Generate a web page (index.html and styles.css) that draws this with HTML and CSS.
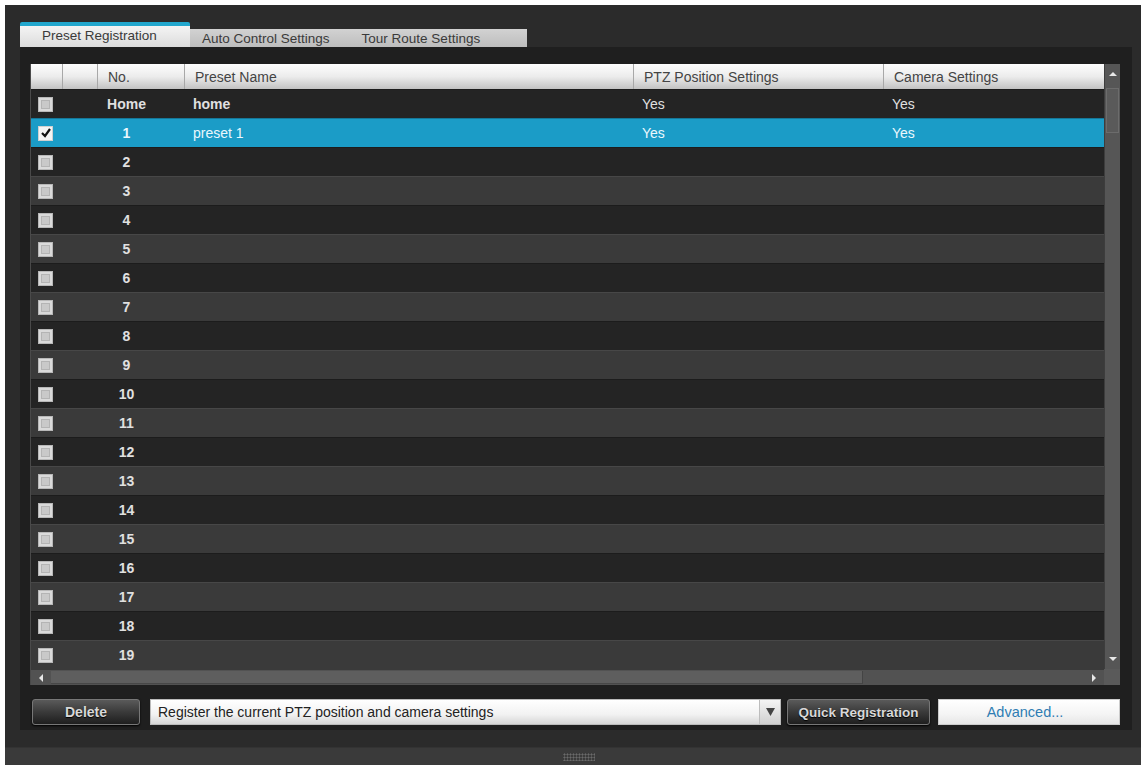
FILE: index.html
```html
<!DOCTYPE html>
<html>
<head>
<meta charset="utf-8">
<link rel="stylesheet" href="styles.css">
</head>
<body>
<div class="window">
  <div class="content">
    <div class="tabs">
      <div class="tab active">Preset Registration</div>
      <div class="tab-rest">
        <div class="tab">Auto Control Settings</div>
        <div class="tab">Tour Route Settings</div>
      </div>
    </div>
    <div class="panel">
      <div class="table">
        <div class="main-area">
          <div class="cols">
            <div class="row head">
              <div class="cell"></div>
              <div class="cell"></div>
              <div class="cell">No.</div>
              <div class="cell">Preset Name</div>
              <div class="cell">PTZ Position Settings</div>
              <div class="cell">Camera Settings</div>
            </div>
            <div class="row dark bold">
              <div class="cell cb-cell"><span class="cb"></span></div>
              <div class="cell"></div>
              <div class="cell num">Home</div>
              <div class="cell">home</div>
              <div class="cell normal">Yes</div>
              <div class="cell normal">Yes</div>
            </div>
            <div class="row selected">
              <div class="cell cb-cell"><span class="cb checked"><svg width="12" height="12" viewBox="0 0 12 12"><path d="M2 6 L5 9 L10 2" fill="none" stroke="#111" stroke-width="2.2"/></svg></span></div>
              <div class="cell"></div>
              <div class="cell num">1</div>
              <div class="cell">preset 1</div>
              <div class="cell">Yes</div>
              <div class="cell">Yes</div>
            </div>
            <div class="row dark"><div class="cell cb-cell"><span class="cb"></span></div><div class="cell"></div><div class="cell num">2</div><div class="cell"></div><div class="cell"></div><div class="cell"></div></div>
            <div class="row light"><div class="cell cb-cell"><span class="cb"></span></div><div class="cell"></div><div class="cell num">3</div><div class="cell"></div><div class="cell"></div><div class="cell"></div></div>
            <div class="row dark"><div class="cell cb-cell"><span class="cb"></span></div><div class="cell"></div><div class="cell num">4</div><div class="cell"></div><div class="cell"></div><div class="cell"></div></div>
            <div class="row light"><div class="cell cb-cell"><span class="cb"></span></div><div class="cell"></div><div class="cell num">5</div><div class="cell"></div><div class="cell"></div><div class="cell"></div></div>
            <div class="row dark"><div class="cell cb-cell"><span class="cb"></span></div><div class="cell"></div><div class="cell num">6</div><div class="cell"></div><div class="cell"></div><div class="cell"></div></div>
            <div class="row light"><div class="cell cb-cell"><span class="cb"></span></div><div class="cell"></div><div class="cell num">7</div><div class="cell"></div><div class="cell"></div><div class="cell"></div></div>
            <div class="row dark"><div class="cell cb-cell"><span class="cb"></span></div><div class="cell"></div><div class="cell num">8</div><div class="cell"></div><div class="cell"></div><div class="cell"></div></div>
            <div class="row light"><div class="cell cb-cell"><span class="cb"></span></div><div class="cell"></div><div class="cell num">9</div><div class="cell"></div><div class="cell"></div><div class="cell"></div></div>
            <div class="row dark"><div class="cell cb-cell"><span class="cb"></span></div><div class="cell"></div><div class="cell num">10</div><div class="cell"></div><div class="cell"></div><div class="cell"></div></div>
            <div class="row light"><div class="cell cb-cell"><span class="cb"></span></div><div class="cell"></div><div class="cell num">11</div><div class="cell"></div><div class="cell"></div><div class="cell"></div></div>
            <div class="row dark"><div class="cell cb-cell"><span class="cb"></span></div><div class="cell"></div><div class="cell num">12</div><div class="cell"></div><div class="cell"></div><div class="cell"></div></div>
            <div class="row light"><div class="cell cb-cell"><span class="cb"></span></div><div class="cell"></div><div class="cell num">13</div><div class="cell"></div><div class="cell"></div><div class="cell"></div></div>
            <div class="row dark"><div class="cell cb-cell"><span class="cb"></span></div><div class="cell"></div><div class="cell num">14</div><div class="cell"></div><div class="cell"></div><div class="cell"></div></div>
            <div class="row light"><div class="cell cb-cell"><span class="cb"></span></div><div class="cell"></div><div class="cell num">15</div><div class="cell"></div><div class="cell"></div><div class="cell"></div></div>
            <div class="row dark"><div class="cell cb-cell"><span class="cb"></span></div><div class="cell"></div><div class="cell num">16</div><div class="cell"></div><div class="cell"></div><div class="cell"></div></div>
            <div class="row light"><div class="cell cb-cell"><span class="cb"></span></div><div class="cell"></div><div class="cell num">17</div><div class="cell"></div><div class="cell"></div><div class="cell"></div></div>
            <div class="row dark"><div class="cell cb-cell"><span class="cb"></span></div><div class="cell"></div><div class="cell num">18</div><div class="cell"></div><div class="cell"></div><div class="cell"></div></div>
            <div class="row light"><div class="cell cb-cell"><span class="cb"></span></div><div class="cell"></div><div class="cell num">19</div><div class="cell"></div><div class="cell"></div><div class="cell"></div></div>
          </div>
          <div class="vscroll">
            <div class="arrow-v"><svg width="8" height="6" viewBox="0 0 8 6"><polygon points="0,5 4,1 8,5" fill="#e8e8e8"/></svg></div>
            <div class="vthumb"></div>
            <div class="vtrack"></div>
            <div class="arrow-v"><svg width="8" height="6" viewBox="0 0 8 6"><polygon points="0,1 4,5 8,1" fill="#e8e8e8"/></svg></div>
          </div>
        </div>
        <div class="hbar">
          <div class="hscroll">
            <div class="arrow-h"><svg width="6" height="8" viewBox="0 0 6 8"><polygon points="5,0 1,4 5,8" fill="#e8e8e8"/></svg></div>
            <div class="hthumb"></div>
            <div class="htrack"></div>
            <div class="arrow-h"><svg width="6" height="8" viewBox="0 0 6 8"><polygon points="1,0 5,4 1,8" fill="#e8e8e8"/></svg></div>
          </div>
          <div class="corner"></div>
        </div>
      </div>
      <div class="controls">
        <button class="btn dark-btn delete">Delete</button>
        <div class="select">
          <span class="select-text">Register the current PTZ position and camera settings</span>
          <span class="select-arrow"><svg width="9" height="8" viewBox="0 0 9 8"><polygon points="0,0 9,0 4.5,8" fill="#444"/></svg></span>
        </div>
        <button class="btn dark-btn quick">Quick Registration</button>
        <button class="btn advanced">Advanced...</button>
      </div>
    </div>
  </div>
  <div class="status">
    <div class="grip"></div>
  </div>
</div>
</body>
</html>
```

FILE: styles.css
```css
* { box-sizing: border-box; }
body {
  margin: 0;
  background: #ffffff;
  font-family: "Liberation Sans", Arial, sans-serif;
}
.window {
  margin: 5px 0 0 5px;
  width: 1136px;
  height: 760px;
  background: #2b2b2b;
  display: flex;
  flex-direction: column;
}
.content {
  flex: 1;
  padding: 17px 9px 17px 15px;
  display: flex;
  flex-direction: column;
}
.tabs {
  height: 25px;
  display: flex;
  align-items: flex-end;
}
.tab {
  font-size: 13.5px;
  color: #3a3a3a;
  white-space: nowrap;
}
.tab.active {
  width: 170px;
  height: 25px;
  border-top: 4px solid #22a7cd;
  background: linear-gradient(#f4f4f4, #dcdcdc);
  padding: 2px 0 0 22px;
  border-radius: 2px 2px 0 0;
}
.tab-rest {
  width: 337px;
  height: 18px;
  background: linear-gradient(#d2d2d2, #bdbdbd);
  display: flex;
  align-items: center;
  padding-left: 12px;
  gap: 32px;
}
.panel {
  height: 683px;
  background: #1f1f1f;
  padding: 17px 12px 5px 10px;
  display: flex;
  flex-direction: column;
}
.table {
  width: 1090px;
  height: 621px;
  display: flex;
  flex-direction: column;
  border-left: 1px solid #4a4a4a;
}
.main-area {
  display: flex;
  height: 605px;
}
.cols {
  width: 1073px;
}
.row {
  display: grid;
  grid-template-columns: 31px 35px 87px 449px 250px 221px;
  height: 29px;
  font-size: 14px;
  color: #e0e0e0;
}
.row .cell {
  display: flex;
  align-items: center;
  padding-left: 9px;
  white-space: nowrap;
  overflow: hidden;
}
.row.head {
  height: 25px;
  background: linear-gradient(#fdfdfd, #ececec 50%, #c2c2c2);
  color: #444;
  font-size: 14px;
}
.row.head .cell {
  border-left: 1px solid #a8a8a8;
  padding-left: 10px;
}
.row.head .cell:first-child { border-left: none; }
.row.dark {
  background: #242424;
  border-top: 1px solid #1c1c1c;
}
.row.light {
  background: #3a3a3a;
  border-top: 1px solid #474747;
}
.row.selected {
  background: #1b9cc7;
  color: #eaf7fd;
  border-top: 1px solid #15789a;
}
.row.bold .cell { font-weight: bold; }
.row.bold .cell.normal { font-weight: normal; }
.row .cell.num {
  justify-content: center;
  padding: 0 28px 0 0;
  font-weight: bold;
}
.row .cell.cb-cell {
  padding-left: 7px;
}
.cb {
  width: 15px;
  height: 15px;
  border: 1px solid #b8b8b8;
  background: #c9c9c9;
  box-shadow: inset 0 0 0 2px #dadada, inset 0 0 0 3px #b4b4b4;
  display: flex;
  align-items: center;
  justify-content: center;
}
.cb.checked {
  background: #f4f4f4;
  box-shadow: none;
  border-color: #d0d0d0;
}
.vscroll {
  width: 16px;
  display: flex;
  flex-direction: column;
  background: #565656;
  border-left: 1px solid #3d3d3d;
}
.arrow-v {
  height: 20px;
  display: flex;
  align-items: center;
  justify-content: center;
}
.vthumb {
  height: 45px;
  margin: 4px 1px 0 1px;
  border: 1px solid #6c6c6c;
  background: #5a5a5a;
}
.vtrack { flex: 1; }
.hbar {
  display: flex;
  height: 16px;
}
.hscroll {
  width: 1074px;
  display: flex;
  align-items: stretch;
  background: #525252;
  border-top: 1px solid #3a3a3a;
}
.arrow-h {
  width: 20px;
  display: flex;
  align-items: center;
  justify-content: center;
}
.hthumb {
  width: 812px;
  margin: 1px 0;
  background: #5e5e5e;
  border-right: 1px solid #444;
  border-bottom: 1px solid #474747;
}
.htrack { flex: 1; }
.corner {
  width: 16px;
  background: #5a5a5a;
}
.controls {
  margin-top: 14px;
  height: 26px;
  display: flex;
  padding-left: 2px;
}
.btn {
  font-family: "Liberation Sans", Arial, sans-serif;
  height: 26px;
  border-radius: 3px;
  padding: 0;
}
.dark-btn {
  background: linear-gradient(#5a5a5a, #3a3a3a 50%, #1e1e1e);
  border: 1px solid #777;
  color: #d8d8d8;
  font-weight: bold;
  font-size: 14px;
  text-shadow: 0 1px 1px #000;
  box-shadow: 0 1px 2px #000;
}
.delete {
  width: 108px;
}
.select {
  width: 631px;
  margin-left: 10px;
  height: 26px;
  background: linear-gradient(#ffffff, #f2f2f2 60%, #d6d6d6);
  border: 1px solid #bbb;
  display: flex;
  align-items: center;
}
.select-text {
  flex: 1;
  font-size: 14px;
  color: #222;
  padding-left: 7px;
}
.select-arrow {
  width: 21px;
  height: 24px;
  border-left: 1px solid #bcbcbc;
  background: linear-gradient(#f4f4f4, #d0d0d0);
  display: flex;
  align-items: center;
  justify-content: center;
}
.quick {
  width: 143px;
  margin-left: 6px;
  font-size: 13.5px;
}
.advanced {
  width: 182px;
  margin-left: 8px;
  background: linear-gradient(#ffffff, #f4f4f4 60%, #e6e6e6);
  border: 1px solid #ccc;
  border-radius: 0;
  color: #2f7db3;
  font-size: 14.5px;
  padding-right: 8px;
}
.status {
  height: 18px;
  background: #3a3a3a;
  border-top: 1px solid #333;
  display: flex;
  align-items: center;
  justify-content: center;
}
.grip {
  width: 32px;
  height: 8px;
  margin-left: 12px;
  background-image: radial-gradient(#6a6a6a 45%, transparent 50%);
  background-size: 3px 3px;
}
```
